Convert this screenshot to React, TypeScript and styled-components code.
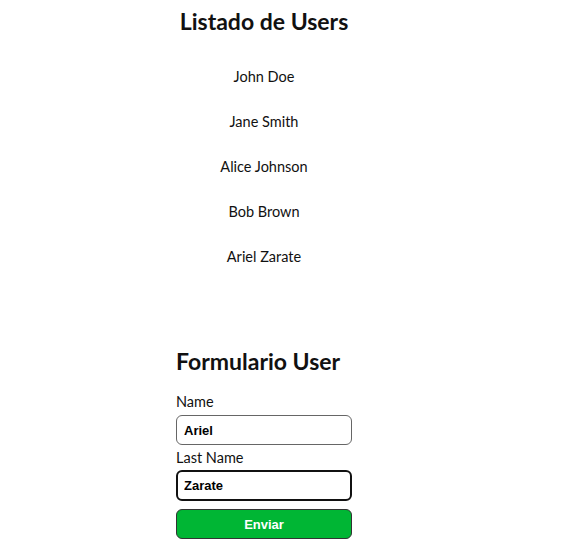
import React, { useEffect, useRef } from "react";
import styled, { createGlobalStyle } from "styled-components";

const Global = createGlobalStyle`
  html, body { margin: 0; padding: 0; background: #fff; }
  body { margin: 8px; font-family: Lato, "Noto Sans", sans-serif; color: #111; }
`;

const Page = styled.div`
  width: 512px;
  display: flex;
  flex-direction: column;
  align-items: center;
`;

const Title = styled.h1`
  font-size: 23px;
  font-weight: 700;
  margin: 1px 0 0;
  line-height: 25px;
`;

const List = styled.ul`
  list-style: none;
  padding: 0;
  margin: 33px 0 0;
  display: flex;
  flex-direction: column;
  align-items: center;
  gap: 25px;
`;

const Item = styled.li`
  font-size: 14.5px;
  line-height: 20px;
`;

const Form = styled.form`
  margin-top: 82px;
  width: 176px;
  display: flex;
  flex-direction: column;
`;

const FormTitle = styled.h2`
  font-size: 23px;
  font-weight: 700;
  margin: 0 0 19px;
  line-height: 25px;
`;

const Label = styled.label`
  font-size: 14.5px;
  line-height: 18px;
  margin-bottom: 4px;
`;

const Input = styled.input<{ $active?: boolean }>`
  box-sizing: border-box;
  width: 176px;
  height: ${(p) => (p.$active ? 31 : 30)}px;
  margin: ${(p) => (p.$active ? "-1px 0 8px" : "0 0 4px")};
  padding: 0 ${(p) => (p.$active ? 6 : 7)}px;
  border-radius: 6px;
  border: ${(p) => (p.$active ? "2px solid #111" : "1px solid #666")};
  outline: none;
  font-family: "Liberation Sans", Arial, sans-serif;
  font-weight: 700;
  font-size: 13px;
  color: #000;
  background: #fff;
`;

const Button = styled.button`
  box-sizing: border-box;
  width: 176px;
  height: 30px;
  border-radius: 6px;
  border: 1px solid #333;
  background: #00b634;
  color: #fff;
  font-family: "Liberation Sans", Arial, sans-serif;
  font-weight: 700;
  font-size: 13px;
  padding: 0;
`;

const users = ["John Doe", "Jane Smith", "Alice Johnson", "Bob Brown", "Ariel Zarate"];

export default function App() {
  const ref = useRef<HTMLInputElement>(null);
  useEffect(() => {
    const el = ref.current;
    if (el) {
      el.focus();
      el.setSelectionRange(el.value.length, el.value.length);
    }
  }, []);
  return (
    <>
      <Global />
      <Page>
        <Title>Listado de Users</Title>
        <List>
          {users.map((u) => (
            <Item key={u}>{u}</Item>
          ))}
        </List>
        <Form onSubmit={(e) => e.preventDefault()}>
          <FormTitle>Formulario User</FormTitle>
          <Label>Name</Label>
          <Input defaultValue="Ariel" />
          <Label>Last Name</Label>
          <Input ref={ref} $active defaultValue="Zarate" />
          <Button type="submit">Enviar</Button>
        </Form>
      </Page>
    </>
  );
}
